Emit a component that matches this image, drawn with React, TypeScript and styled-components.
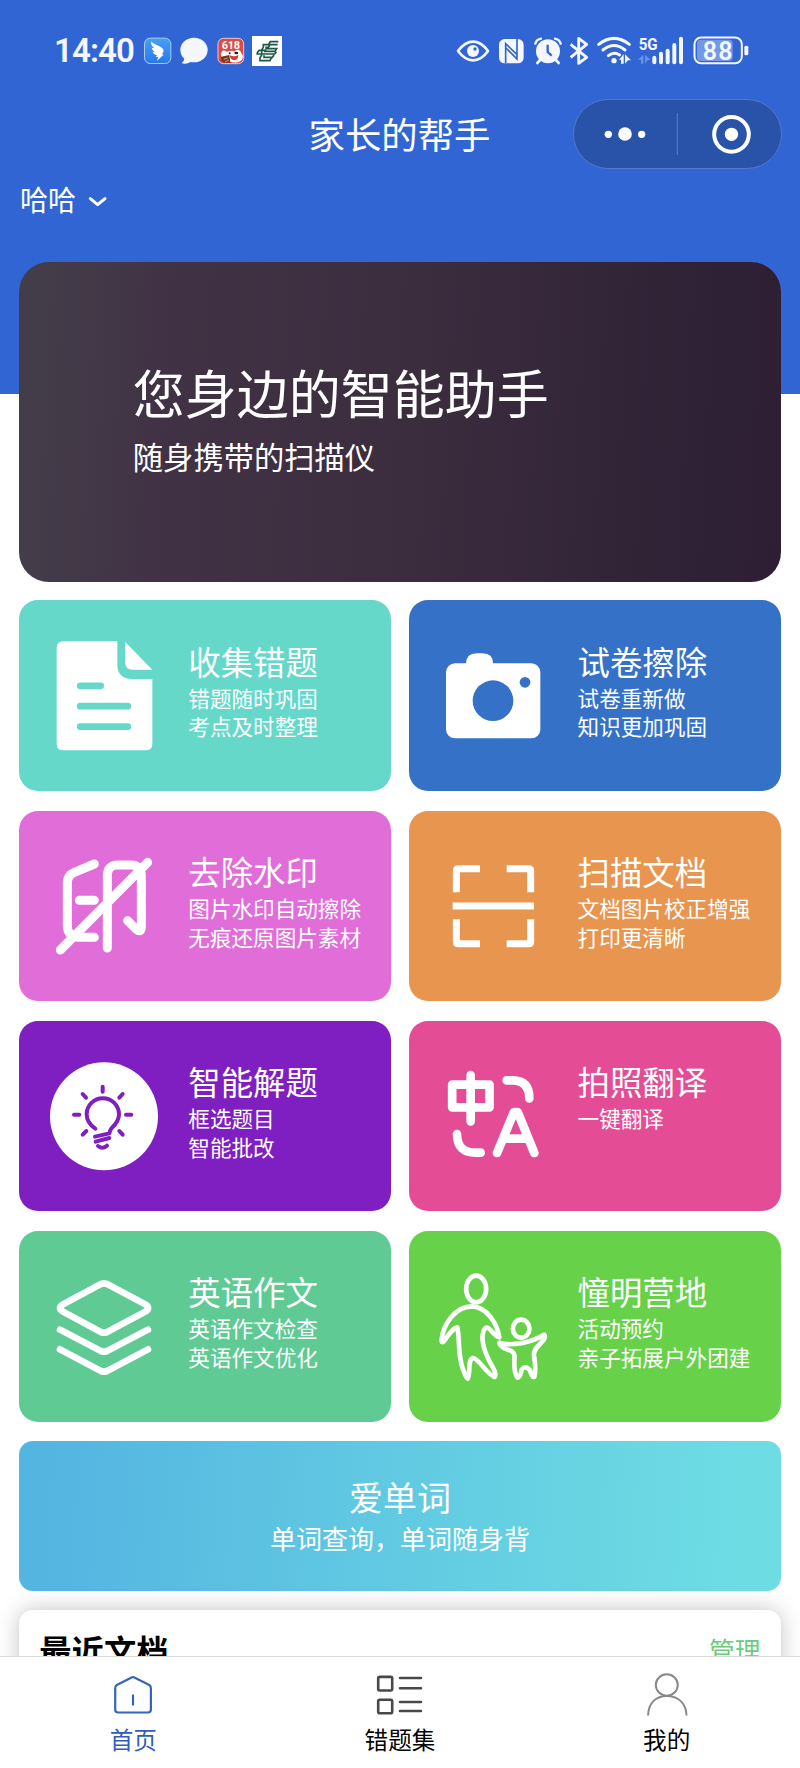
import React from 'react';
import styled, { createGlobalStyle } from 'styled-components';

const Global = createGlobalStyle`
  * { box-sizing: border-box; }
  body { margin: 0; background: #fff; font-family: "Noto Sans CJK SC", sans-serif; }
  svg { display: block; flex: none; overflow: visible; }
`;

const Screen = styled.div`
  width: 800px;
  height: 1768px;
  display: flex;
  flex-direction: column;
  overflow: hidden;
`;

const Content = styled.main`
  flex: 1;
  min-height: 0;
  overflow: hidden;
  color: #fff;
  background: linear-gradient(#3265d4 394.5px, #fff 394.5px);
`;

const StatusBar = styled.div`
  display: flex;
  justify-content: space-between;
  align-items: center;
  height: 30px;
  margin-top: 36px;
  padding: 0 50.7px 0 54px;
`;

const StatusGroup = styled.div`
  display: flex;
  align-items: center;
  gap: 8px;
`;

const Clock = styled.span`
  width: 82px;
  font: 600 33px/30px Roboto, sans-serif;
  letter-spacing: -0.9px;
  color: #f4f7ff;
  white-space: nowrap;
`;

const NavBar = styled.header`
  display: grid;
  grid-template-columns: 1fr auto 1fr;
  align-items: center;
  height: 70px;
  margin-top: 33px;
  padding: 0 18px 0 17px;
`;

const NavTitle = styled.h1`
  grid-column: 2;
  margin: 0;
  padding-bottom: 3px;
  font-size: 36.4px;
  line-height: 50px;
  font-weight: 400;
`;

const Capsule = styled.div`
  justify-self: end;
  display: flex;
  align-items: center;
  width: 209px;
  height: 70px;
  border: 1.5px solid #5379c6;
  border-radius: 35px;
  background: #2853a8;
`;

const UserSwitch = styled.div`
  display: flex;
  align-items: center;
  gap: 12px;
  height: 40px;
  margin: 10px 0 0 20px;
  font-size: 28px;
  line-height: 40px;

  svg { margin-top: 5px; }
`;

const Banner = styled.section`
  height: 320.3px;
  margin: 43px 19.5px 0 19.3px;
  padding: 99px 0 0 113.5px;
  border-radius: 30px;
  background: linear-gradient(93deg, #433c49 4%, #413345 18%, #3b2d3e 52%, #2f2135 90%, #2e1e34 100%);
`;

const BannerTitle = styled.h2`
  margin: 0;
  font-size: 52px;
  line-height: 62px;
  font-weight: 400;
`;

const BannerText = styled.p`
  margin: 13px 0 0;
  font-size: 30.3px;
  line-height: 40px;
`;

const TileGrid = styled.section`
  display: grid;
  grid-template-columns: 1fr 1fr;
  grid-auto-rows: 190.5px;
  gap: 19.8px 17.4px;
  margin: 18px 19.5px 0 19.3px;
`;

const Tile = styled.article<{ $color: string }>`
  display: flex;
  gap: 27.7px;
  padding: 38.5px 0 0 27.3px;
  border-radius: 19px;
  background: ${(p) => p.$color};
`;

const TileBody = styled.div`
  padding-top: 0.8px;
  white-space: nowrap;
`;

const TileTitle = styled.h3`
  margin: 0 0 2px;
  font-size: 32.4px;
  line-height: 42px;
  font-weight: 400;
`;

const TileLine = styled.p`
  margin: 0;
  font-size: 21.6px;
  line-height: 28.7px;
`;

const WordCard = styled.section`
  height: 150px;
  margin: 19px 19.5px 0 19.3px;
  padding-top: 35px;
  border-radius: 14px;
  text-align: center;
  background: linear-gradient(94deg, #54b5e1 4%, #60c8e2 45%, #6edde3 96%);
`;

const WordTitle = styled.h3`
  margin: 0;
  font-size: 34px;
  line-height: 42px;
  font-weight: 400;
`;

const WordText = styled.p`
  margin: 2px 0 0;
  font-size: 26px;
  line-height: 36px;
`;

const RecentCard = styled.section`
  display: flex;
  justify-content: space-between;
  align-items: center;
  height: 140px;
  margin: 19.3px 19.5px 0 19.3px;
  padding: 0 20px 61px;
  border-radius: 14px;
  background: #fff;
  box-shadow: 0 0 22px rgba(0, 0, 0, 0.24);
`;

const RecentTitle = styled.h2`
  margin: 0;
  font-size: 32.3px;
  line-height: 44px;
  font-weight: 700;
  color: #000;
`;

const Manage = styled.span`
  font-size: 25.8px;
  line-height: 40px;
  padding-top: 1px;
  color: #6cca7f;
`;

const TabBar = styled.nav`
  display: grid;
  grid-template-columns: repeat(3, 1fr);
  height: 112px;
  border-top: 1.5px solid #d9d9d9;
  background: #fff;
`;

const Tab = styled.div<{ $active?: boolean }>`
  display: flex;
  flex-direction: column;
  align-items: center;
  padding-top: 14px;
  font-size: 23.6px;
  line-height: 32px;
  color: ${(p) => (p.$active ? '#2f5fb9' : '#000')};
`;

const TabLabel = styled.span`
  margin-top: 4px;
`;

const ink = '#f4f7ff';

type BoxProps = { box: string; scale?: number; children: React.ReactNode };

/* Icons are drawn on a 3x grid and scaled down to layout pixels. */
const Icon = ({ box, scale = 3, children }: BoxProps) => {
  const [, , w, h] = box.split(' ').map(Number);
  return (
    <svg viewBox={box} width={w / scale} height={h / scale} fill="none">
      {children}
    </svg>
  );
};

const WingIcon = () => (
  <Icon box="432 108 85 90">
    <defs>
      <linearGradient id="wing" x1="0" y1="0" x2="0" y2="1">
        <stop offset="0" stopColor="#46a0f6" />
        <stop offset="1" stopColor="#2878ea" />
      </linearGradient>
    </defs>
    <rect x="433.500" y="114.500" width="79" height="76" rx="17" fill="url(#wing)" stroke="#a9cdf8" strokeWidth="3" />
    <path d="M454 124C459 132 474 136 482 141C489 145 492 149 490 156L486 163L491 164L471 182L475 170L468 171L471 165C463 164 460 160 458 155L465 156C459 152 456 148 455 143L463 145C455 138 452 132 454 124Z" fill="#fff" />
  </Icon>
);

const BubbleIcon = () => (
  <Icon box="541 108 87 90">
    <ellipse cx="583" cy="150" rx="41" ry="37" fill={ink} />
    <path d="M552 168C556 178 552 184 546 190C558 193 568 190 575 184Z" fill={ink} />
  </Icon>
);

const SaleIcon = () => (
  <Icon box="652 108 81 90">
    <rect x="655" y="115" width="77" height="76" rx="16" fill="#df4a43" stroke="#f0c5cc" strokeWidth="3" />
    <path d="M664 168C663 150 673 149 681 155Q695 150 705 154C711 146 723 148 725 160C734 170 729 183 715 187C698 190 686 183 676 177C668 176 664 174 664 168Z" fill="#fff" />
    <path d="M664 170L689 165L692 188H675Q664 186 664 178Z" fill="#74381c" />
    <path d="M672 178L684 174M676 186L688 180" stroke="#d9a070" strokeWidth="3" />
    <path d="M690 166Q704 172 716 165Q716 180 703 181Q692 179 690 166Z" fill="#d93a35" />
    <circle cx="690" cy="160" r="3" fill="#222" />
    <ellipse cx="710" cy="159" rx="6" ry="4" fill="#222" />
    <text x="693" y="147" textAnchor="middle" fontFamily="Roboto, sans-serif" fontWeight="700" fontSize="33" letterSpacing="-1" fill="#fff">618</text>
  </Icon>
);

const BankIcon = () => (
  <Icon box="757 108 90 90">
    <rect x="757" y="108" width="90" height="90" fill="#fff" />
    <path d="M836 125H812L806 134H791V142L786 150V166L781 173V182H811L815 174M834 134H811L806 142H797M797 146H831L826 154H793M772 160L778 151H800M770 162H825L830 155M793 166V172H818L823 165" stroke="#1c5947" strokeWidth="5" />
  </Icon>
);

const EyeIcon = () => (
  <Icon box="168 108 102 90">
    <path d="M174 153C190 132 204 125 219 125C234 125 249 132 264 153C249 174 234 181 219 181C204 181 190 174 174 153Z" stroke={ink} strokeWidth="8" strokeLinejoin="round" />
    <circle cx="219" cy="153" r="18" fill={ink} />
    <circle cx="225" cy="147" r="5" fill="#3265d4" />
  </Icon>
);

const NfcIcon = () => (
  <Icon box="294 108 80 90">
    <rect x="297" y="117" width="74" height="73" rx="17" fill={ink} />
    <path d="M317 190V131L350 163" stroke="#3265d4" strokeWidth="5" />
    <path d="M351 117V177L318 144" stroke="#3265d4" strokeWidth="5" />
  </Icon>
);

const AlarmIcon = () => (
  <Icon box="398 108 86 90">
    <circle cx="443" cy="154" r="36" fill={ink} />
    <path d="M405 131Q409 118 422 116M481 131Q477 118 464 116" stroke={ink} strokeWidth="7" strokeLinecap="round" />
    <path d="M419 180L411 189M467 180L475 189" stroke={ink} strokeWidth="8" strokeLinecap="round" />
    <path d="M442 134V156L454 167" stroke="#3265d4" strokeWidth="7" />
  </Icon>
);

const BluetoothIcon = () => (
  <Icon box="508 108 58 90">
    <path d="M513 133L561 172L537 190V115L561 133L513 172" stroke={ink} strokeWidth="8.500" strokeLinejoin="round" />
  </Icon>
);

const WifiIcon = () => (
  <Icon box="590 108 100 90">
    <path d="M595 133Q641 97 687 133M608 150Q641 123 674 150M624 167Q641 154 658 165" stroke={ink} strokeWidth="9" strokeLinecap="round" />
    <circle cx="641" cy="182" r="8" fill={ink} />
    <path d="M656 179L670 163V191H662V179ZM674 163L692 181H683L674 191Z" fill={ink} />
  </Icon>
);

const SignalIcon = () => (
  <Icon box="714 108 142 90">
    <text x="716" y="149" fontFamily="Roboto, sans-serif" fontWeight="700" fontSize="52" textLength="57" lengthAdjust="spacingAndGlyphs" fill={ink}>5G</text>
    <path d="M714 179L730 164V191H723V179ZM735 164L752 180H743L735 191Z" fill="#6c91e3" />
    <path d="M763 173V187M783 161V187M803 152V187M823 135V187M843 116V187" stroke={ink} strokeWidth="12" strokeLinecap="round" />
  </Icon>
);

const BatteryIcon = () => (
  <Icon box="880 108 168 90">
    <rect x="892" y="119" width="107" height="64" rx="11" fill="#7598e3" />
    <rect x="884.500" y="112.500" width="142" height="77" rx="20" stroke={ink} strokeWidth="6" />
    <rect x="1034" y="137" width="12" height="29" rx="5" fill={ink} />
    <text x="955.500" y="179" textAnchor="middle" fontFamily="Roboto, sans-serif" fontWeight="600" fontSize="75" letterSpacing="3" fill={ink}>88</text>
  </Icon>
);

const CapsuleIcons = () => (
  <Icon box="522 300 620 206">
    <circle cx="625" cy="403" r="11" fill="#fff" />
    <circle cx="675" cy="402" r="20.500" fill="#fff" />
    <circle cx="725" cy="403" r="11" fill="#fff" />
    <path d="M832 340V465" stroke="#5379c6" strokeWidth="3.500" />
    <circle cx="994.500" cy="403" r="52" stroke="#fff" strokeWidth="12" />
    <circle cx="994.500" cy="403" r="20" fill="#fff" />
  </Icon>
);

const L = '141 146 342 342';
const R = '108 146 342 342';

const DocumentIcon = ({ color }: { color: string }) => (
  <Icon box={L}>
    <path d="M190 153H352V222Q352 266 396 266H457V460Q457 480 437 480H190Q170 480 170 460V173Q170 153 190 153Z" fill="#fff" />
    <path d="M375 154L457 238H398Q375 238 375 215Z" fill="#fff" />
    <path d="M241 286.500H302M241 347.500H383M241 409H383" stroke={color} strokeWidth="20.500" strokeLinecap="round" />
  </Icon>
);

const CameraIcon = ({ color }: { color: string }) => (
  <Icon box={R}>
    <path d="M198 225V219Q199 189 230 189H248Q279 189 279 219V225Z" fill="#fff" />
    <rect x="138" y="219" width="283" height="225" rx="27" fill="#fff" />
    <circle cx="279" cy="331" r="61" fill={color} />
    <circle cx="375" cy="276" r="16" fill={color} />
  </Icon>
);

const WatermarkIcon = () => (
  <Icon box={L}>
    <path d="M283 191L223 216Q202 225 202 247V375Q202 411 238 411H283M238 300H283M322 443V226Q322 194 354 194H392Q424 194 424 226V382Q422 398 409 387L383 361M181 449L443 186" stroke="#fff" strokeWidth="27" strokeLinecap="round" strokeLinejoin="round" />
  </Icon>
);

const ScanIcon = () => (
  <Icon box={R}>
    <path d="M169 276V211Q169 205 175 205H240M320 205H386Q392 205 392 211V276M392 357V424Q392 430 386 430H320M240 430H175Q169 430 169 424V357M158 317H402" stroke="#fff" strokeWidth="21" />
  </Icon>
);

const BulbIcon = ({ color }: { color: string }) => (
  <Icon box={L}>
    <circle cx="312" cy="318" r="162" fill="#fff" />
    <path d="M286 355C268 343 260 329 260 312A48.500 48.500 0 0 1 357 312C357 330 346 343 336 352Q330 358 328 369L285 379M328 383L287 394M294 407Q309 418 321 406" stroke={color} strokeWidth="12" strokeLinecap="round" strokeLinejoin="round" />
    <path d="M308 229V244M248 251L258 262M368 251L358 262M222 313H238M378 313H394M248 373L259 362M368 373L358 362" stroke={color} strokeWidth="12" strokeLinecap="round" />
  </Icon>
);

const TranslateIcon = () => (
  <Icon box={R}>
    <g stroke="#fff" strokeWidth="26" strokeLinecap="round" strokeLinejoin="round">
      <rect x="156.500" y="223" width="112" height="68" />
      <path d="M212 194V333M320 210H339Q388 211 388 264M171 371Q171 427 227 427H242M291 428L342 305H353L403 428M318 385H378" />
    </g>
  </Icon>
);

const LayersIcon = () => (
  <Icon box={L}>
    <path d="M299 190Q312 182 325 190L436 249Q453 260 436 271L325 330Q312 338 299 330L189 271Q171 260 189 249ZM180 325L299 387Q312 395 325 387L444 325M180 384L299 447Q312 455 325 447L444 384" stroke="#fff" strokeWidth="20" strokeLinecap="round" strokeLinejoin="round" />
  </Icon>
);

const FamilyIcon = () => (
  <Icon box={R}>
    <g stroke="#fff" strokeWidth="14" strokeLinejoin="round">
      <ellipse cx="228.500" cy="203" rx="30" ry="40" />
      <path d="M216 255C165 255 130 310 125 354Q124 368 133 358C148 336 158 322 172 318C180 350 172 400 189 444Q197 466 203 472C213 450 202 414 219 410C238 412 256 455 284 467Q291 462 279 439C258 403 244 370 248 340Q252 314 265 320C278 330 283 343 298 348C292 308 262 257 216 255Z" />
      <ellipse cx="363.500" cy="322" rx="25" ry="27" />
      <path d="M298 364C335 376 393 364 432 340Q438 345 430 357C417 373 400 382 402 402C405 425 409 448 403 466Q396 470 390 447Q376 430 365 445Q361 468 353 469C342 457 342 429 344 405Q343 390 324 385Q301 378 298 364Z" />
    </g>
  </Icon>
);

const HomeIcon = () => (
  <svg viewBox="109.700 1671.500 48 48" width="48" height="48" fill="none" stroke="#3465bd" strokeWidth="2.200" strokeLinejoin="round">
    <path d="M132.300 1678Q133.700 1677 135.100 1678L150 1685.500Q151.600 1686.500 151.600 1689V1710Q151.600 1713 148.600 1713H118.900Q115.900 1713 115.900 1710V1689Q115.900 1686.500 117.500 1685.500Z" />
    <path d="M133.700 1695V1706" />
  </svg>
);

const ListIcon = () => (
  <svg viewBox="376.500 1671.500 48 48" width="48" height="48" fill="none" stroke="#484848" strokeWidth="2.600">
    <rect x="378.700" y="1677.400" width="14" height="13.600" rx="1.500" />
    <rect x="378.700" y="1700.200" width="14" height="13.600" rx="1.500" />
    <path d="M400.500 1678.500H421.500M400.500 1688.800H421.500M400.500 1702.500H421.500M400.500 1711.500H421.500" strokeLinecap="round" />
  </svg>
);

const UserIcon = () => (
  <svg viewBox="642.700 1671.500 48 48" width="48" height="48" fill="none" stroke="#888" strokeWidth="2">
    <ellipse cx="666.500" cy="1685.500" rx="11" ry="10.700" />
    <path d="M647.800 1716C648 1703 656 1696.500 666.500 1696.500S686 1703 686.200 1716" />
  </svg>
);

const tiles = [
  { color: '#66d8c9', icon: DocumentIcon, title: '收集错题', lines: ['错题随时巩固', '考点及时整理'] },
  { color: '#3572c7', icon: CameraIcon, title: '试卷擦除', lines: ['试卷重新做', '知识更加巩固'] },
  { color: '#e16dd9', icon: WatermarkIcon, title: '去除水印', lines: ['图片水印自动擦除', '无痕还原图片素材'] },
  { color: '#e8954f', icon: ScanIcon, title: '扫描文档', lines: ['文档图片校正增强', '打印更清晰'] },
  { color: '#7f1fc1', icon: BulbIcon, title: '智能解题', lines: ['框选题目', '智能批改'] },
  { color: '#e44d96', icon: TranslateIcon, title: '拍照翻译', lines: ['一键翻译'] },
  { color: '#5fca94', icon: LayersIcon, title: '英语作文', lines: ['英语作文检查', '英语作文优化'] },
  { color: '#67d14a', icon: FamilyIcon, title: '憧明营地', lines: ['活动预约', '亲子拓展户外团建'] },
];

export default function App() {
  return (
    <Screen>
      <Global />
      <Content>
        <StatusBar>
          <StatusGroup>
            <Clock>14:40</Clock>
            <WingIcon />
            <BubbleIcon />
            <SaleIcon />
            <BankIcon />
          </StatusGroup>
          <StatusGroup>
            <EyeIcon />
            <NfcIcon />
            <AlarmIcon />
            <BluetoothIcon />
            <WifiIcon />
            <SignalIcon />
            <BatteryIcon />
          </StatusGroup>
        </StatusBar>
        <NavBar>
          <NavTitle>家长的帮手</NavTitle>
          <Capsule>
            <CapsuleIcons />
          </Capsule>
        </NavBar>
        <UserSwitch>
          哈哈
          <Icon box="264 584 60 42">
            <path d="M271 595L293 613L315 595" stroke="#fff" strokeWidth="9" strokeLinecap="round" strokeLinejoin="round" />
          </Icon>
        </UserSwitch>
        <Banner>
          <BannerTitle>您身边的智能助手</BannerTitle>
          <BannerText>随身携带的扫描仪</BannerText>
        </Banner>
        <TileGrid>
          {tiles.map(({ color, icon: TileIcon, title, lines }) => (
            <Tile key={title} $color={color}>
              <TileIcon color={color} />
              <TileBody>
                <TileTitle>{title}</TileTitle>
                {lines.map((line) => (
                  <TileLine key={line}>{line}</TileLine>
                ))}
              </TileBody>
            </Tile>
          ))}
        </TileGrid>
        <WordCard>
          <WordTitle>爱单词</WordTitle>
          <WordText>单词查询，单词随身背</WordText>
        </WordCard>
        <RecentCard>
          <RecentTitle>最近文档</RecentTitle>
          <Manage>管理</Manage>
        </RecentCard>
      </Content>
      <TabBar>
        <Tab $active>
          <HomeIcon />
          <TabLabel>首页</TabLabel>
        </Tab>
        <Tab>
          <ListIcon />
          <TabLabel>错题集</TabLabel>
        </Tab>
        <Tab>
          <UserIcon />
          <TabLabel>我的</TabLabel>
        </Tab>
      </TabBar>
    </Screen>
  );
}
